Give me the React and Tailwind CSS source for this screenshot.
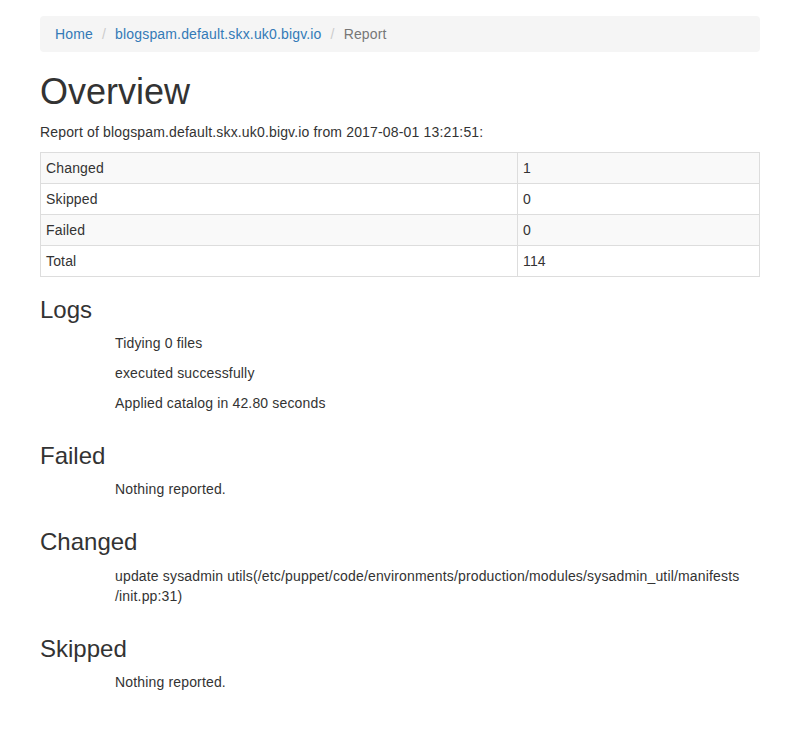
import React from "react";

const font = { fontFamily: '"Liberation Sans", Arial, Helvetica, sans-serif' };

function Section({ title, items }) {
  return (
    <div className="flex flex-col">
      <h3 className="text-[24px] leading-[26.4px] font-normal mt-[20px] mb-[10px] tracking-normal">{title}</h3>
      <div className="ml-[75px] w-[630px] flex flex-col">
        {items.map((t, i) => (
          <p key={i} className="mb-[10px] leading-[20px]">{t}</p>
        ))}
      </div>
    </div>
  );
}

export default function App() {
  const rows = [
    ["Changed", "1"],
    ["Skipped", "0"],
    ["Failed", "0"],
    ["Total", "114"],
  ];
  return (
    <div className="min-h-[747px] bg-white text-[#333] text-[14px] leading-[20px] tracking-[0.16px]" style={font}>
      <div className="w-[750px] mx-auto px-[15px] pt-[16px] pb-[30px] flex flex-col">
        <ol className="flex bg-[#f5f5f5] rounded-[4px] px-[15px] py-[8px] mb-[20px] leading-[20px]">
          <li><a className="text-[#337ab7]" href="#">Home</a></li>
          <li className="flex ml-[4px]"><span className="px-[5px] text-[#ccc]">/&nbsp;</span><a className="text-[#337ab7]" href="#">blogspam.default.skx.uk0.bigv.io</a></li>
          <li className="flex ml-[4px]"><span className="px-[5px] text-[#ccc]">/&nbsp;</span><span className="text-[#777]">Report</span></li>
        </ol>
        <h1 className="text-[36px] leading-[39.6px] font-normal mb-[10px] tracking-normal">Overview</h1>
        <p className="mb-[10px]">Report of blogspam.default.skx.uk0.bigv.io from 2017-08-01 13:21:51:</p>
        <table className="w-full border-collapse border border-[#ddd]">
          <tbody>
            {rows.map(([k, v], i) => (
              <tr key={k} className={i % 2 === 0 ? "bg-[#f9f9f9]" : ""}>
                <td className="w-[477px] border border-[#ddd] p-[5px] leading-[20px] text-left">{k}</td>
                <td className="border border-[#ddd] p-[5px] leading-[20px] text-left">{v}</td>
              </tr>
            ))}
          </tbody>
        </table>
        <Section title="Logs" items={["Tidying 0 files", "executed successfully", "Applied catalog in 42.80 seconds"]} />
        <Section title="Failed" items={["Nothing reported."]} />
        <Section
          title="Changed"
          items={[
            <>
              update sysadmin utils(/etc/puppet/code/environments/production/modules/sysadmin_util/manifests
              <br />
              /init.pp:31)
            </>,
          ]}
        />
        <Section title="Skipped" items={["Nothing reported."]} />
      </div>
    </div>
  );
}
